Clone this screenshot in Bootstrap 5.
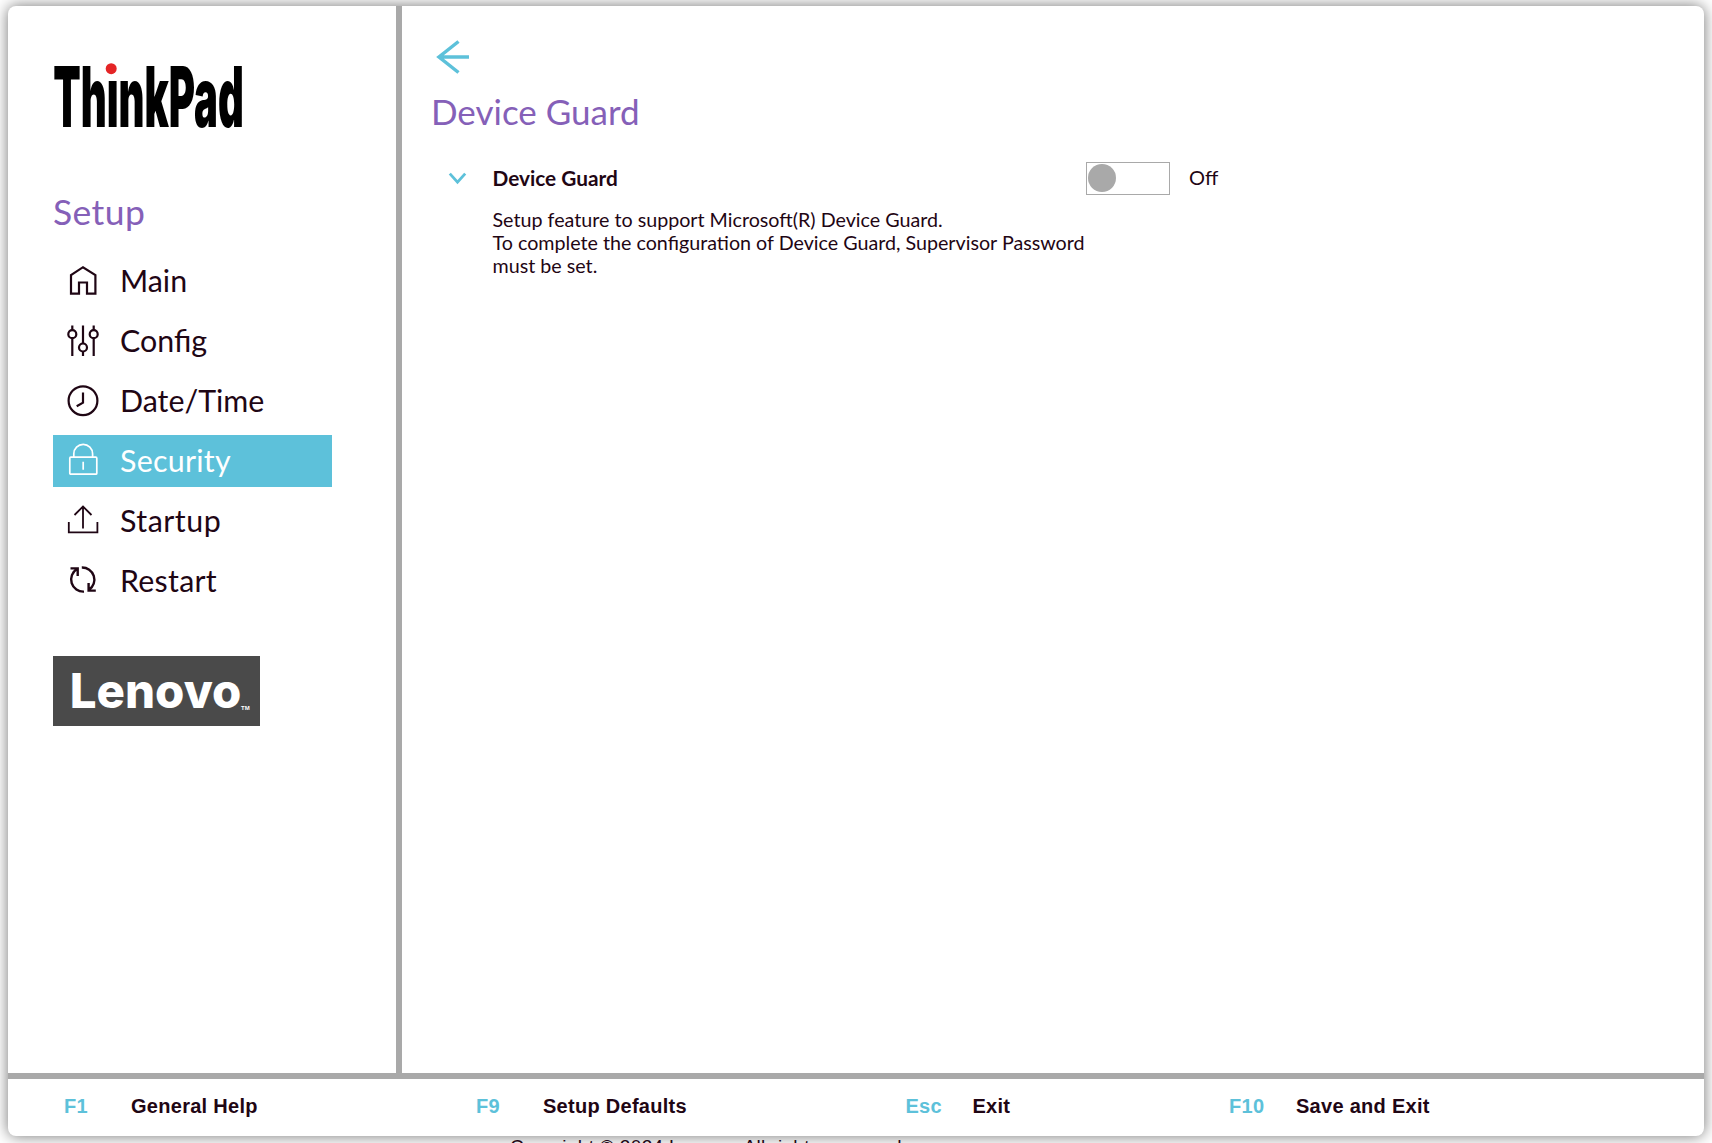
<!DOCTYPE html>
<html lang="en">
<head>
<meta charset="utf-8">
<title>ThinkPad Setup</title>
<link href="https://cdn.jsdelivr.net/npm/bootstrap@5.3.0/dist/css/bootstrap.min.css" rel="stylesheet">
<style>
:root{--sky:#5dc1da;--violet:#8560b8;--ink:#1f0614;--line:#a9a9a9}
body{font-family:Lato,"Open Sans",sans-serif;color:var(--ink);background:#fff;height:1143px;padding:6px 8px 0}
.shell{height:1130px;border-radius:8px;box-shadow:0 0 15px rgba(0,0,0,.55)}
.side{width:394px;border-right:6px solid var(--line);padding:57px 0 0 45px}
.brand{width:190px;height:66px;margin-left:1px;overflow:visible}
.side-title{color:var(--violet);font-size:35.5px;line-height:44px;margin:61px 0 0;letter-spacing:.4px}
.menu{width:279px;gap:8px;margin-top:21px}
.menu .nav-link{height:52px;padding:0 0 0 14px;color:var(--ink);font-size:30.4px;line-height:50px}
.menu .nav-link span{padding-bottom:2px}
.menu .nav-link svg{width:32px;height:32px;margin-right:21px;flex:none;overflow:visible}
.menu .nav-link.active{background:var(--sky);color:#fff}
.track-1{letter-spacing:.25px}
.track-2{letter-spacing:.5px}
.maker{width:207px;height:70px;margin-top:49px}
.pane{padding:33px 0 0 30px}
.pane-title{color:var(--violet);font-size:35px;line-height:42px;margin:15px 0 0 -1px}
.opt{margin-top:29px;height:34px}
.opt-name{font-size:20.8px;margin-left:24.5px;width:593.5px}
.opt-state{font-size:20px;margin-left:19px;padding-bottom:2px}
.toggle{width:84px;height:33px;border:1px solid var(--line);padding-left:1px}
.knob{width:28px;height:28px;border-radius:50%;background:var(--line)}
.about{font-size:19.7px;line-height:23px;margin:13px 0 0 60.5px}
.keys{height:63px;border-top:6px solid var(--line);font:bold 20px/24px "Liberation Sans",Arial,sans-serif;letter-spacing:.28px;padding:0 0 4px 56px;display:grid;grid-template-columns:412px 429.5px 323.5px auto;align-items:center}
.keys b{color:var(--sky);width:67px}
.copy{font:19px/22px "Liberation Sans",Arial,sans-serif;letter-spacing:.33px;padding-left:502px}
</style>
</head>
<body class="overflow-hidden">
<div class="shell bg-white d-flex flex-column overflow-hidden">
 <div class="d-flex flex-grow-1">
  <aside class="side d-flex flex-column align-items-start flex-shrink-0">
   <svg class="brand" viewBox="0 0 190 66"><text x="-.7" y="63.5" font-family="Inter" font-weight="900" font-size="84" textLength="190.5" lengthAdjust="spacingAndGlyphs" fill="#000">ThinkPad</text><rect x="50.5" y="-2" width="13.5" height="15.5" fill="#fff"/><circle cx="57.2" cy="5.7" r="5.5" fill="#e42526"/></svg>
   <h1 class="side-title fw-normal">Setup</h1>
   <nav class="menu nav flex-column">
    <a class="nav-link d-flex align-items-center"><svg viewBox="0 0 32 32" fill="none" stroke="currentColor" stroke-width="2.2"><path d="M4 28.6V10L16 2.2 28.4 10v18.6H20V17.5h-8v11.1z"/></svg><span>Main</span></a>
    <a class="nav-link d-flex align-items-center"><svg viewBox="0 0 32 32" fill="none" stroke="currentColor" stroke-width="2.2"><path d="M5.3 .5v5M5.3 13v18M16 .5v18.5M16 26.5v4.5M26.7 .5v5M26.7 13v18"/><circle cx="5.3" cy="9.2" r="4"/><circle cx="16" cy="22.5" r="4"/><circle cx="26.7" cy="9.2" r="4"/></svg><span>Config</span></a>
    <a class="nav-link d-flex align-items-center"><svg viewBox="0 0 32 32" fill="none" stroke="currentColor" stroke-width="2.2"><circle cx="16" cy="15.7" r="14.4"/><path d="M16 7.5v10.2L9.7 21.3"/></svg><span>Date/Time</span></a>
    <a class="nav-link active d-flex align-items-center"><svg viewBox="0 0 32 32" fill="none" stroke="currentColor" stroke-width="1.7"><rect x="2.8" y="12.2" width="27" height="17" rx="1"/><path d="M6.8 12V8.8a9.4 9.4 0 0 1 18.8 0V12M16.2 16.8v8"/></svg><span class="track-1">Security</span></a>
    <a class="nav-link d-flex align-items-center"><svg viewBox="0 0 32 32" fill="none" stroke="currentColor" stroke-width="1.8"><path d="M1.8 17v10.3h28.6V17M16 23.5V1.7M7.5 10L16 1.5l8.5 8.5"/></svg><span class="track-2">Startup</span></a>
    <a class="nav-link d-flex align-items-center"><svg viewBox="0 0 32 32" fill="none" stroke="currentColor" stroke-width="2.4"><path d="M3.5 3.4h7.2V11M10 4A12.2 12.2 0 0 0 17 26.6M14.8 2.5A12.2 12.2 0 0 1 22 24.8M28.8 25.6h-7.2V18"/></svg><span class="track-1">Restart</span></a>
   </nav>
   <svg class="maker" viewBox="0 0 207 70"><rect width="207" height="70" fill="#4a4a4a"/><text x="16.8" y="52" font-family="Inter" font-weight="800" font-size="48" textLength="171.5" lengthAdjust="spacingAndGlyphs" fill="#fff">Lenovo</text><text x="188" y="53.5" font-family="Liberation Sans" font-weight="bold" font-size="6" fill="#fff">TM</text></svg>
  </aside>
  <main class="pane flex-grow-1">
   <svg class="d-block" width="40" height="36" viewBox="0 0 40 36" fill="none" stroke="#5dc1da" stroke-width="3.5"><path d="M37 18H7M26.5 2.5L7 18l19.5 15.5"/></svg>
   <h2 class="pane-title fw-normal">Device Guard</h2>
   <div class="opt d-flex align-items-center">
    <svg class="ms-3" width="20" height="14" viewBox="0 0 20 14" fill="none" stroke="#5dc1da" stroke-width="2.8"><path d="M1.8 2.6l7.7 8.6 7.7-8.6"/></svg>
    <div class="opt-name fw-bold">Device Guard</div>
    <div class="toggle d-flex align-items-center"><div class="knob"></div></div>
    <div class="opt-state">Off</div>
   </div>
   <p class="about">Setup feature to support Microsoft(R) Device Guard.<br>To complete the configuration of Device Guard, Supervisor Password<br>must be set.</p>
  </main>
 </div>
 <footer class="keys"><div class="d-flex"><b>F1</b><span>General Help</span></div><div class="d-flex"><b>F9</b><span>Setup Defaults</span></div><div class="d-flex"><b>Esc</b><span>Exit</span></div><div class="d-flex"><b>F10</b><span>Save and Exit</span></div></footer>
</div>
<div class="copy">Copyright © 2024 Lenovo. All rights reserved.</div>
<script src="https://cdn.jsdelivr.net/npm/bootstrap@5.3.0/dist/js/bootstrap.bundle.min.js"></script>
</body>
</html>
